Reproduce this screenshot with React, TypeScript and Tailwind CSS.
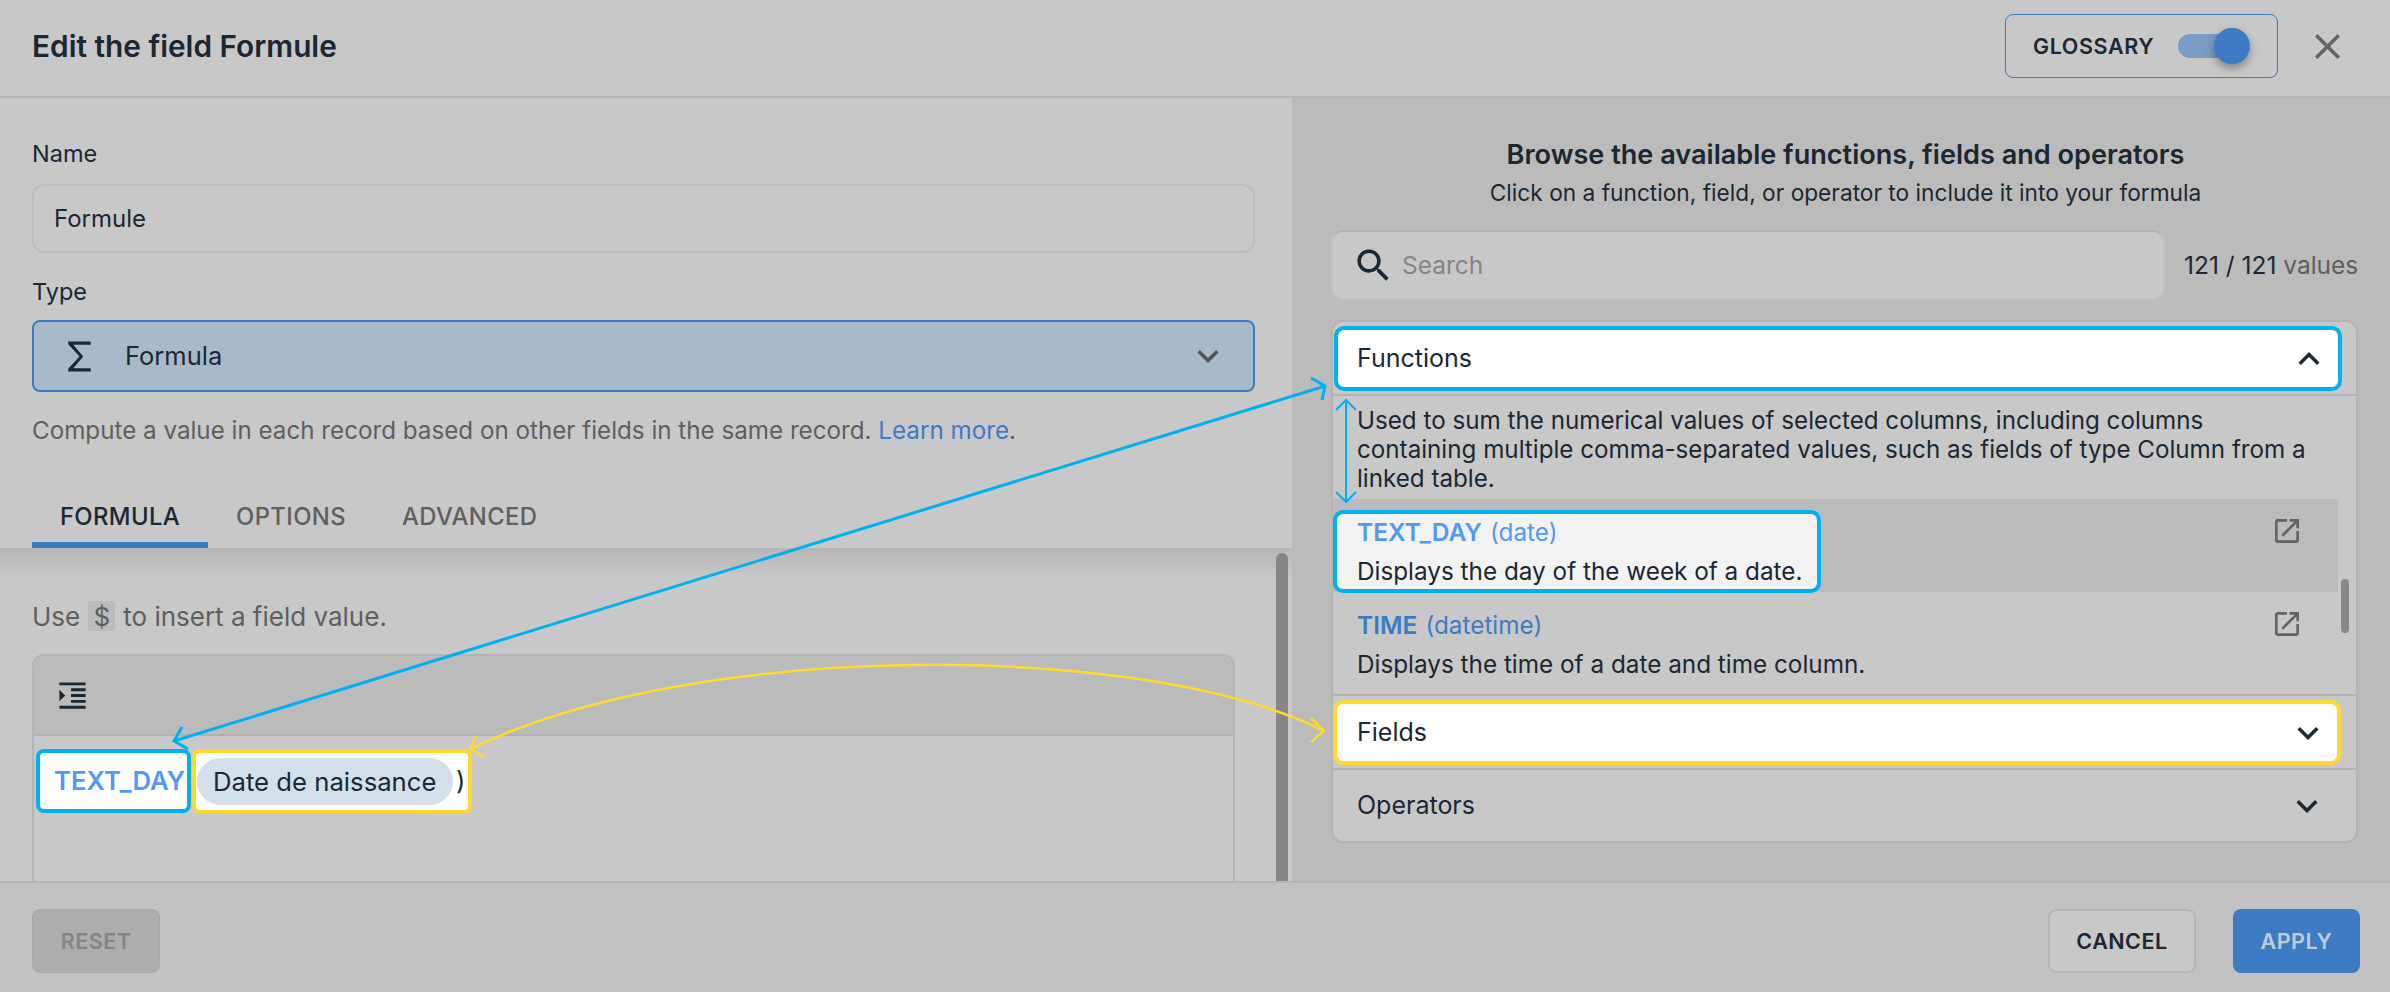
import type { ReactNode } from "react";

const paths = {
  sigma: "M6 4h12v1.7H8.7l5.3 6.3-5.3 6.3H18V20H6v-1.5l6-6.5-6-6.5z",
  down: "M16.59 8.59 12 13.17 7.41 8.59 6 10l6 6 6-6z",
  up: "m12 8-6 6 1.41 1.41L12 10.83l4.59 4.58L18 14z",
  close: "M19 6.41 17.59 5 12 10.59 6.41 5 5 6.41 10.59 12 5 17.59 6.41 19 12 13.41 17.59 19 19 17.59 13.41 12z",
  search: "M15.5 14h-.79l-.28-.27C15.41 12.59 16 11.11 16 9.5 16 5.91 13.09 3 9.5 3S3 5.91 3 9.5 5.91 16 9.5 16c1.61 0 3.09-.59 4.23-1.57l.27.28v.79l5 4.99L20.49 19l-4.99-5zm-6 0C7.01 14 5 11.99 5 9.5S7.01 5 9.5 5 14 7.01 14 9.5 11.99 14 9.5 14z",
  indent: "M3 21h18v-2H3v2zM3 8v8l4-4-4-4zm8 9h10v-2H11v2zM3 3v2h18V3H3zm8 6h10V7H11v2zm0 4h10v-2H11v2z",
  open: "M19 19H5V5h7V3H5c-1.11 0-2 .9-2 2v14c0 1.1.89 2 2 2h14c1.1 0 2-.9 2-2v-7h-2v7zM14 3v2h3.59l-9.83 9.83 1.41 1.41L19 6.41V10h2V3h-7z",
};

function Icon({ name, className }: { name: keyof typeof paths; className: string }) {
  return (
    <svg viewBox="0 0 24 24" fill="currentColor" className={`shrink-0 ${className}`}>
      <path d={paths[name]} />
    </svg>
  );
}

function FunctionRow({ name, arg, desc, className }: { name: string; arg: string; desc: string; className?: string }) {
  return (
    <div className={`flex flex-col ${className ?? ""}`}>
      <div className="h-[36px] flex items-center text-[24.3px] leading-[36px]">
        <span className="font-semibold text-[24.5px]">{name}</span>
        <span className="ml-[8px]">{arg}</span>
      </div>
      <div className="mt-[3px] h-[36px] flex items-center text-[#1b2733] text-[24.3px] whitespace-nowrap">{desc}</div>
    </div>
  );
}

function AccordionHeader({ children, open, box }: { children: ReactNode; open?: boolean; box: string }) {
  return (
    <div className={`flex items-center justify-between bg-white rounded-[10px] border-[4px] pr-[8px] text-[25px] ${box}`}>
      <span>{children}</span>
      <Icon name={open ? "up" : "down"} className="w-[42px] h-[42px]" />
    </div>
  );
}

function Annotations() {
  return (
    <svg width="2390" height="992" className="absolute inset-0 pointer-events-none" fill="none">
      {/* blue: function name */}
      <g stroke="#00b0f0" strokeWidth="3">
        <path d="M1325 386 L174 741" />
        <path d="M1311 378 L1325 386 L1322 400" />
        <path d="M182 727 L174 741 L188 749" />
      </g>
      {/* blue: description height */}
      <g stroke="#00b0f0" strokeWidth="2">
        <path d="M1346 400 L1346 502" />
        <path d="M1336 410 L1346 400 L1356 410" />
        <path d="M1336 492 L1346 502 L1356 492" />
      </g>
      {/* yellow: field */}
      <g stroke="#ffd92f" strokeWidth="2.5">
        <path d="M471 749 C690 640 1144 640 1324 731" />
        <path d="M476 736 L470 749 L484 757" />
        <path d="M1311 718 L1324 731 L1311 742" />
      </g>
    </svg>
  );
}

export default function App() {
  return (
    <div className="relative w-[2390px] h-[992px] flex flex-col overflow-hidden bg-[#c8c8c8] text-[#1b2733] font-['Inter',sans-serif]">
      {/* Header */}
      <div className="h-[98px] shrink-0 flex items-center justify-between border-b-2 border-[#b5b5b5] pb-[4px] pl-[32px] pr-[50px]">
        <h1 className="text-[29.8px] font-semibold">Edit the field Formule</h1>
        <div className="flex items-center gap-[37px]">
          <div className="w-[273px] h-[64px] flex items-center border border-[#3d7bc4] rounded-[8px] pl-[27px]">
            <span className="w-[123px] text-[21.5px] font-semibold tracking-[0.6px] whitespace-nowrap">GLOSSARY</span>
            <div className="relative ml-[22px] w-[64px] h-[24px] rounded-full bg-[#7b9cc5]">
              <div className="absolute right-[-8px] top-[-6px] w-[36px] h-[36px] rounded-full bg-[#3d7bc4] shadow-[0_4px_8px_rgba(0,0,0,0.35)]" />
            </div>
          </div>
          <Icon name="close" className="w-[43px] h-[43px] text-[#646464] -mx-[9px]" />
        </div>
      </div>

      {/* Body */}
      <div className="flex-1 min-h-0 flex">
        {/* Left panel */}
        <div className="w-[1294px] shrink-0 flex flex-col border-r-2 border-[#b9b9b9]">
          <div className="shrink-0 px-[32px] pt-[40px] pr-[37px]">
            <div className="h-[32px] leading-[32px] text-[23.5px]">Name</div>
            <div className="mt-[14px] h-[69px] flex items-center border-2 border-[#bdbdbd] rounded-[12px] pl-[20px] text-[24px]">Formule</div>
            <div className="mt-[23px] h-[32px] leading-[32px] text-[23.5px]">Type</div>
            <div className="mt-[12px] h-[72px] flex items-center border-2 border-[#3d7bc4] rounded-[8px] bg-[#a8bac9] text-[25.5px]">
              <Icon name="sigma" className="w-[45px] h-[45px] ml-[23px]" />
              <span className="ml-[23px] flex-1 pt-[1px]">Formula</span>
              <Icon name="down" className="w-[42px] h-[42px] text-[#555] mr-[24px]" />
            </div>
            <div className="mt-[23px] h-[32px] leading-[32px] text-[24.2px] text-[#5f5f5f] whitespace-nowrap">
              Compute a value in each record based on other fields in the same record. <span className="text-[#3d7bc4]">Learn more</span>.
            </div>
            <div className="mt-[41px] h-[60px] flex text-[23.8px] font-medium tracking-[0.4px] text-[#5f5f5f]">
              <div className="w-[176px] justify-center pt-[3px] flex items-center border-b-[6px] border-[#3d7bc4] text-[#1b2733]">FORMULA</div>
              <div className="ml-[28px] flex items-center pt-[3px] pb-[6px]">OPTIONS</div>
              <div className="ml-[56px] flex items-center pt-[3px] pb-[6px]">ADVANCED</div>
            </div>
          </div>

          <div className="relative flex-1 min-h-0 overflow-hidden pl-[32px] pr-[57px] bg-[linear-gradient(#b6b6b6,#c8c8c8_30px)]">
            <div className="mt-[52px] h-[32px] flex items-center text-[26px] text-[#5f5f5f]">
              Use
              <span className="mx-[8px] w-[27px] h-[30px] flex items-center justify-center bg-[#bbbbbb] rounded-[3px]">$</span>
              to insert a field value.
            </div>
            <div className="mt-[22px] h-[300px] border-2 border-b-0 border-[#b4b4b4] rounded-t-[12px]">
              <div className="h-[80px] flex items-center bg-[#bbbbbb] border-b-2 border-[#b2b2b2] rounded-t-[10px]">
                <Icon name="indent" className="w-[35px] h-[35px] ml-[21px]" />
              </div>
              <div className="mt-[13px] ml-[2px] flex items-stretch text-[25.7px]">
                <div className="w-[155px] h-[64px] flex items-center bg-white border-[4px] border-[#00b0f0] rounded-[8px] pl-[14px] pt-[1px] font-semibold text-[#5298f6] whitespace-nowrap">
                  TEXT_DAY
                </div>
                <div className="ml-[1px] w-[280px] h-[65px] flex items-center bg-white border-[4px] border-[#ffd92f] rounded-[8px] pl-[1px]">
                  <span className="w-[256px] h-[47px] flex items-center bg-[#d3e0ea] rounded-full pl-[16px] pt-[1px] whitespace-nowrap">Date de naissance</span>
                  <span className="ml-[3px]">)</span>
                </div>
              </div>
            </div>
            <div className="absolute top-[5px] bottom-0 right-[4px] w-[12px] rounded-t-full bg-[#868686]" />
          </div>
        </div>

        {/* Right panel */}
        <div className="flex-1 min-w-0 flex flex-col bg-[#bbbbbb] pl-[37px] pr-[30px]">
          <div className="mt-[38px] h-[38px] leading-[38px] text-center text-[27.1px] font-semibold whitespace-nowrap">Browse the available functions, fields and operators</div>
          <div className="mt-[2px] h-[34px] leading-[34px] text-center text-[22.7px] whitespace-nowrap">Click on a function, field, or operator to include it into your formula</div>

          <div className="mt-[20px] flex items-center">
            <div className="w-[834px] h-[70px] flex items-center bg-[#c8c8c8] border-2 border-[#c2c2c2] border-t-[#b2b2b2] rounded-[12px] text-[24.5px] text-[#858585]">
              <Icon name="search" className="w-[43px] h-[43px] ml-[19px] text-[#1b2733]" />
              <span className="ml-[7px] pt-[1px]">Search</span>
            </div>
            <span className="ml-[19px] text-[24.5px] whitespace-nowrap">121 / 121 <span className="text-[#5f5f5f]">values</span></span>
          </div>

          <div className="mt-[20px] w-[1027px] h-[523px] bg-[#c8c8c8] border-2 border-[#b4b4b4] rounded-[12px] flex flex-col overflow-hidden">
            <div className="h-[74px] shrink-0 pt-[4px] pl-[1px] border-b-2 border-[#b2b2b2]">
              <AccordionHeader open box="w-[1008px] h-[65px] border-[#00b0f0] pl-[19px]">Functions</AccordionHeader>
            </div>

            <div className="relative h-[298px] shrink-0">
              <div className="pl-[24px] pt-[10px] text-[24.2px] leading-[29px] whitespace-nowrap">
                Used to sum the numerical values of selected columns, including columns<br />
                containing multiple comma-separated values, such as fields of type Column from a<br />
                linked table.
              </div>
              <div className="mt-[6px] w-[1005px] h-[93px] pt-[11px] bg-[#bbbbbb] flex justify-between">
                <div className="w-[488px] h-[83px] bg-[#f2f2f2] border-[4px] border-[#00b0f0] rounded-[10px] pl-[20px] text-[#5298f6]">
                  <FunctionRow name="TEXT_DAY" arg="(date)" desc="Displays the day of the week of a date." />
                </div>
                <Icon name="open" className="w-[32px] h-[32px] mr-[35px] mt-[5px] text-[#636363]" />
              </div>
              <div className="w-[1005px] flex justify-between pl-[24px] pt-[15px] text-[#3d7bc4]">
                <FunctionRow name="TIME" arg="(datetime)" desc="Displays the time of a date and time column." />
                <Icon name="open" className="w-[32px] h-[32px] mr-[35px] mt-[1px] text-[#636363]" />
              </div>
              <div className="absolute right-[7px] top-[183px] w-[8px] h-[54px] rounded-full bg-[#888888]" />
            </div>

            <div className="h-[76px] shrink-0 pt-[4px] border-y-2 border-[#b2b2b2]">
              <AccordionHeader box="w-[1008px] h-[65px] border-[#ffd92f] pl-[20px]">Fields</AccordionHeader>
            </div>

            <div className="flex-1 flex items-center justify-between pl-[24px] pr-[28px] pt-[1px] text-[25px]">
              <span>Operators</span>
              <Icon name="down" className="w-[42px] h-[42px]" />
            </div>
          </div>
        </div>
      </div>

      {/* Footer */}
      <div className="h-[111px] shrink-0 flex items-start justify-between bg-[#c2c2c2] border-t-2 border-[#b5b5b5] pt-[26px] pl-[32px] pr-[30px] text-[21.5px] font-semibold tracking-[0.5px]">
        <div className="w-[128px] h-[64px] flex items-center justify-center rounded-[8px] bg-[#adadad] border border-[#a8a8a8] text-[#858585]">RESET</div>
        <div className="flex gap-[37px]">
          <div className="w-[148px] h-[64px] flex items-center justify-center rounded-[8px] bg-[#c8c8c8] border-2 border-[#b6b6b6]">CANCEL</div>
          <div className="w-[127px] h-[64px] flex items-center justify-center rounded-[8px] bg-[#3d7bc4] text-[#c2cbd4]">APPLY</div>
        </div>
      </div>

      <Annotations />
    </div>
  );
}
